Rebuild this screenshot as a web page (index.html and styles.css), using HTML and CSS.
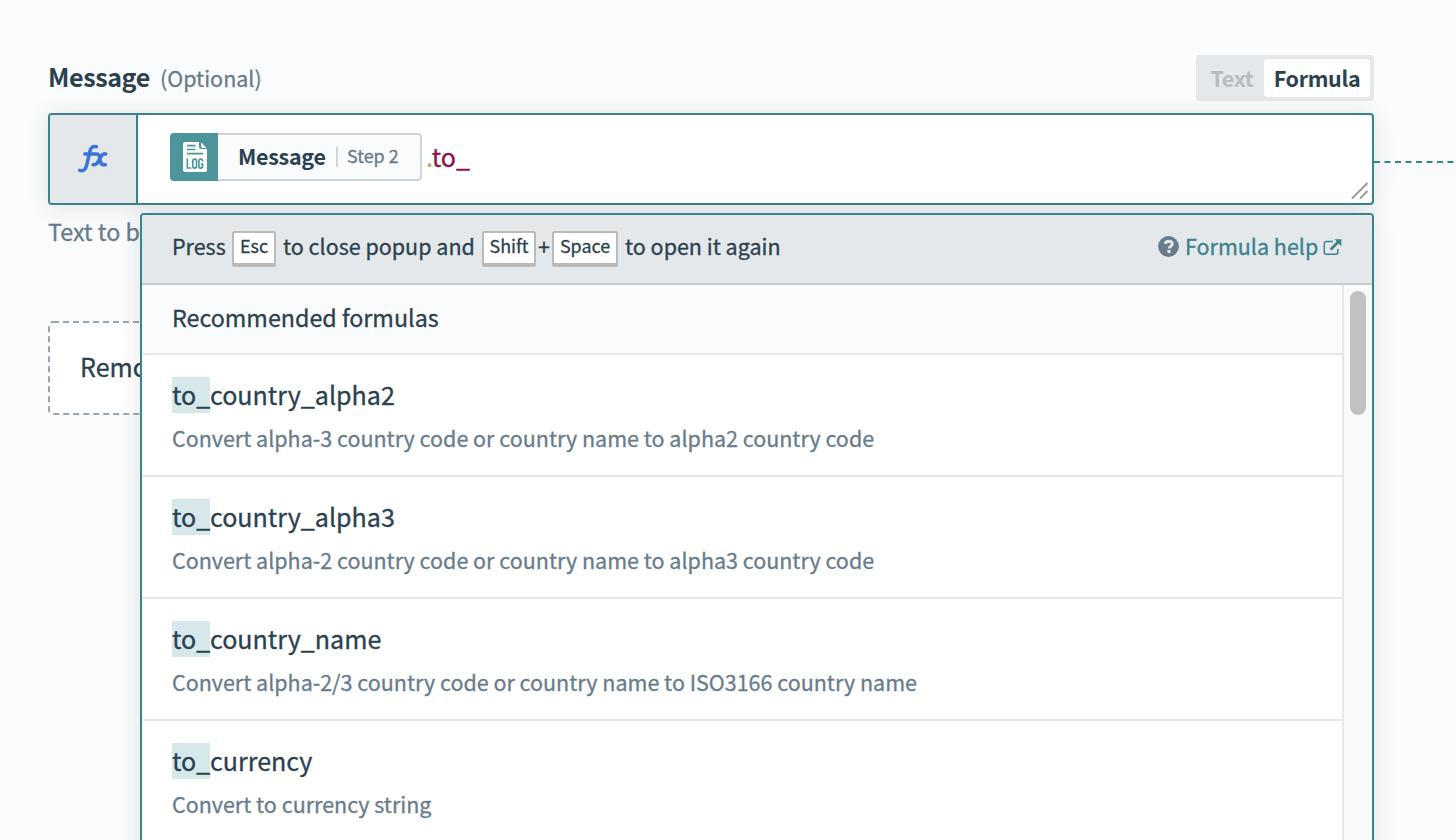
FILE: index.html
```html
<!DOCTYPE html>
<html lang="en">
<head>
<meta charset="utf-8">
<title>Message formula</title>
<link rel="stylesheet" href="styles.css">
</head>
<body>
<main class="page">
  <header class="field-head">
    <div class="field-label"><span class="name">Message</span><span class="optional">(Optional)</span></div>
    <div class="toggle"><span class="toggle-off">Text</span><span class="toggle-on">Formula</span></div>
  </header>
  <div class="field-wrap">
    <section class="field">
      <div class="fx">
        <svg width="32" height="32" viewBox="0 0 32 32" fill="none" stroke="#3a74d8" stroke-width="3.500" stroke-linecap="round" stroke-linejoin="round"><path d="M1.700 27.400c3.800.9 6-.8 6.900-4.900L12 8c.9-3.800 2.900-5.200 6.400-4.200M6.800 10.900h11.800c1.900 0 2.300.7 2.800 2.700l1.200 5.400c.5 2.200 1.700 3.200 4.800 2.700M27.700 10.900c-2.600-.3-3.700.8-5 3l-2.400 4.400c-1.300 2.500-2.600 3.700-5.300 3.400"/></svg>
      </div>
      <div class="editor">
        <div class="pill">
          <div class="pill-icon">
            <svg width="24" height="30" viewBox="0 0 24 30"><path fill="#fff" d="M2 0h14v4.500Q16 7 18.500 7H24v21q0 2-2 2H2q-2 0-2-2V2Q0 0 2 0z"/><path fill="#fff" d="M18 .5 23.500 6H20q-2 0-2-2z"/><path d="M4 3.700h8.500M4 7.500h8.500M4 11.600h16" stroke="#4b959b" stroke-width="1.700" fill="none"/><path d="M4.300 16.500v9.500h4M19.500 19.400v-.6q0-1.700-1.800-1.700t-1.800 1.800v5.400q0 1.800 1.800 1.800t1.800-1.800V22h-1.700" stroke="#4b959b" stroke-width="1.600" fill="none"/><rect x="9.800" y="17.100" width="3.700" height="9" rx="1.800" stroke="#4b959b" stroke-width="1.600" fill="none"/></svg>
          </div>
          <div class="pill-body"><span class="pill-name">Message</span><span class="pill-step">Step 2</span></div>
        </div>
        <div class="code"><span class="dot">.</span>to_</div>
        <svg class="grip" width="18" height="18" viewBox="0 0 18 18" stroke="#999" stroke-width="1.900"><path d="M1 16.500 16.500 1M9 16.500l7.500-7.500"/></svg>
      </div>
    </section>
    <svg class="connector" width="80" height="2" viewBox="0 0 80 2"><path d="M0 1h80" stroke="#3b828d" stroke-width="2" stroke-dasharray="6 4.500"/></svg>
    <section class="popup">
      <div class="popup-head">
        <div class="hint"><span class="h1">Press</span><kbd class="k1">Esc</kbd><span class="h2">to close popup and</span><kbd class="k2">Shift</kbd><span class="plus">+</span><kbd class="k3">Space</kbd><span class="h3">to open it again</span></div>
        <div class="help">
          <svg width="22" height="22" viewBox="0 0 22 22"><circle cx="10.500" cy="11.500" r="10.400" fill="#687c8b"/><path d="M6.900 8.800C7.600 7 8.800 6.200 10.600 6.200c2.200 0 3.700 1.200 3.700 2.900 0 2.300-3.200 2.300-3.200 4.500" fill="none" stroke="#e4e8eb" stroke-width="2.900"/><rect x="9.400" y="15" width="3.200" height="3" fill="#e4e8eb"/></svg>
          <span class="help-text">Formula help</span>
          <svg class="ext" width="19" height="17" viewBox="0 0 19 17" fill="none" stroke="#3b828d"><path d="M10 2.500H3.500Q1.300 2.500 1.300 4.500v8.800q0 2 2 2h9.500q2 0 2-2V10" stroke-width="1.500"/><path d="m7.700 10.500 8-8" stroke-width="2.700"/><path d="M11.500.3H18.300v6.900z" fill="#3b828d" stroke="none"/></svg>
        </div>
      </div>
      <div class="popup-body">
        <div class="list">
          <div class="group">Recommended formulas</div>
          <article class="item"><div class="fn"><mark>to_</mark>country_alpha2</div><div class="desc">Convert alpha-3 country code or country name to alpha2 country code</div></article>
          <article class="item"><div class="fn"><mark>to_</mark>country_alpha3</div><div class="desc">Convert alpha-2 country code or country name to alpha3 country code</div></article>
          <article class="item"><div class="fn"><mark>to_</mark>country_name</div><div class="desc">Convert alpha-2/3 country code or country name to ISO3166 country name</div></article>
          <article class="item"><div class="fn"><mark>to_</mark>currency</div><div class="desc">Convert to currency string</div></article>
        </div>
        <div class="scrollbar"><div class="thumb"></div></div>
      </div>
    </section>
  </div>
  <p class="note">Text to be</p>
  <div class="dashed">
    <svg class="dashes" width="300" height="94" fill="none"><rect x="1" y="1" width="298" height="92" rx="4" stroke="#98a5ae" stroke-width="2" stroke-dasharray="6 4"/></svg>
    <span>Remove</span>
  </div>
</main>
</body>
</html>
```
FILE: styles.css
```css
* { box-sizing: border-box; }
body { margin: 0; background: #fafbfd; color: #2b414e; font-family: "Noto Sans CJK SC", "Noto Sans CJK JP", sans-serif; -webkit-text-stroke: .3px currentColor; }
.page { width: 1456px; height: 840px; padding: 55px 0 0 48px; overflow: hidden; }
.field-head { display: flex; justify-content: space-between; width: 1326px; height: 46px; margin-bottom: 12px; }
.field-label { display: flex; line-height: 46px; white-space: nowrap; }
.name { width: 112px; font-size: 25.070px; font-weight: 700; letter-spacing: -.400px; line-height: 42px; -webkit-text-stroke: 0; }
.optional { font-size: 21.490px; color: #687c8b; }
.toggle { display: flex; width: 178px; padding: 4px; background: #e4e8eb; border-radius: 4px; font-size: 21.490px; font-weight: 700; letter-spacing: -.320px; line-height: 37px; text-align: center; -webkit-text-stroke: 0; }
.toggle-off { width: 64px; color: #b9bbbd; }
.toggle-on { width: 106px; height: 38px; background: #fff; border-radius: 4px; }
.field-wrap { position: relative; width: 1326px; }
.field { display: flex; height: 92px; border: 2px solid #3b828d; border-radius: 4px; background: #fff; box-shadow: 0 2px 22px rgba(40, 40, 40, .12); overflow: hidden; }
.fx { display: flex; width: 88px; padding-left: 28px; align-items: center; background: #e4e8eb; border-right: 2px solid #3b828d; }
.editor { position: relative; display: flex; flex: 1; padding: 18px 0 0 32px; }
.pill { display: flex; width: 252px; height: 48px; border-radius: 4px; overflow: hidden; }
.pill-icon { display: flex; width: 48px; align-items: center; justify-content: center; padding-left: 2px; background: #4b959b; }
.pill-body { display: flex; flex: 1; align-items: center; padding-left: 20px; background: #fafbfd; border: 2px solid #cfd3da; border-left: 0; border-radius: 0 4px 4px 0; white-space: nowrap; }
.pill-name { width: 98px; padding-bottom: 2px; font-size: 21.490px; font-weight: 700; letter-spacing: -.300px; line-height: 42px; -webkit-text-stroke: 0; }
.pill-step { padding: 0 0 4px 9px; border-left: 2px solid #cfd3da; font-size: 17.900px; line-height: 16px; color: #687c8b; }
.code { padding-left: 4px; font-size: 25.070px; line-height: 46px; color: #8b1150; }
.dot { color: #c8a468; }
.grip { position: absolute; right: 3px; bottom: 3px; }
.connector { position: absolute; left: 1326px; top: 48px; }
.popup { position: absolute; z-index: 1; left: 92px; top: 100px; width: 1234px; height: 660px; border: 2px solid #3b828d; border-radius: 4px; background: #fff; box-shadow: 0 2px 22px rgba(40, 40, 40, .12); overflow: hidden; }
.popup-head { display: flex; justify-content: space-between; height: 70px; padding: 0 30px; background: #e4e8eb; border-bottom: 2px solid #c8c9ca; font-size: 21.490px; line-height: 62px; white-space: nowrap; }
.hint, .help { display: flex; }
.h1 { width: 60px; }
.h2 { width: 199px; }
.h3 { margin-left: 7px; }
kbd { height: 36px; margin-top: 16px; border: 2px solid #bababa; border-bottom-width: 4px; border-radius: 2px; background: #fff; font-family: inherit; font-size: 17.900px; line-height: 24px; text-align: center; }
.k1 { width: 44px; margin-right: 7px; }
.k2 { width: 54px; }
.k3 { width: 66px; }
.plus { width: 16px; text-align: center; }
.help { color: #3b828d; }
.help svg { margin-top: 20px; }
.help-text { width: 143px; padding-left: 5px; }
.help .ext { margin-top: 24px; }
.popup-body { display: flex; height: 600px; }
.list { width: 1202px; border-right: 2px solid #e4e8eb; }
.group { height: 70px; padding-left: 30px; background: #fafbfd; border-bottom: 2px solid #e4e8eb; font-size: 23.280px; line-height: 64px; }
.item { height: 122px; padding: 22px 30px 0; border-bottom: 2px solid #e4e8eb; white-space: nowrap; }
.fn { height: 36px; font-size: 25.070px; line-height: 35px; }
mark { display: inline-block; width: 38px; height: 36px; background: #d6e8e9; color: inherit; vertical-align: top; }
.desc { margin-top: 8px; font-size: 21.490px; line-height: 34px; color: #687c8b; }
.scrollbar { flex: 1; padding: 6px 6px 0; background: #fafafa; }
.thumb { width: 16px; height: 124px; border-radius: 8px; background: #c1c1c1; }
.note { margin: 8px 0 0; font-size: 23.280px; line-height: 36px; color: #687c8b; }
.dashed { position: relative; width: 300px; height: 94px; margin-top: 72px; padding-left: 32px; background: #fff; font-size: 25.070px; line-height: 90px; }
.dashes { position: absolute; left: 0; top: 0; }
```
